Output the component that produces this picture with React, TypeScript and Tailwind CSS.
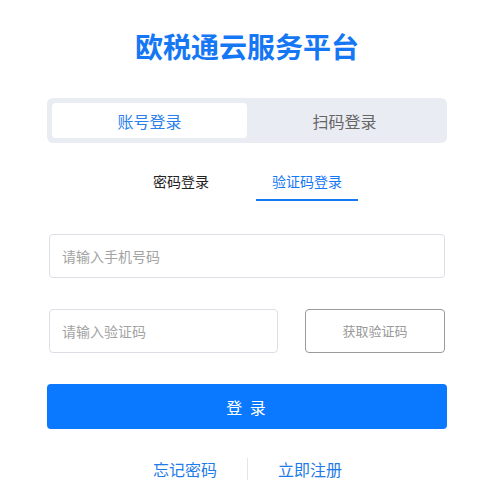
import React from "react";

export default function App() {
  const font = { fontFamily: '"Noto Sans CJK SC", "Noto Sans", sans-serif' };
  return (
    <div className="w-[496px] h-[495px] bg-white overflow-hidden" style={font}>
      <div className="w-[400px] ml-[47px] pt-[26px] flex flex-col">
        <div className="h-[40px] leading-[40px] text-center text-[28px] font-bold text-[#1677f5]">
          欧税通云服务平台
        </div>

        <div className="mt-[32px] h-[45px] p-[5px] rounded-[6px] bg-[#e9ecf3] flex">
          <div className="w-[195px] h-[35px] rounded-[4px] bg-white flex items-center justify-center text-[16px] text-[#2a7fea]">
            账号登录
          </div>
          <div className="flex-1 h-[35px] flex items-center justify-center text-[16px] text-[#666666]">
            扫码登录
          </div>
        </div>

        <div className="mt-[28px] pl-[83px] flex gap-[24px]">
          <div className="w-[102px] flex flex-col items-center">
            <div className="h-[20px] leading-[20px] text-[14px] text-[#222222]">密码登录</div>
            <div className="mt-[8px] h-[2px] w-full bg-transparent" />
          </div>
          <div className="w-[102px] flex flex-col items-center">
            <div className="h-[20px] leading-[20px] text-[14px] text-[#1677f5]">验证码登录</div>
            <div className="mt-[8px] h-[2px] w-full bg-[#1677f5]" />
          </div>
        </div>

        <div className="mt-[33px] mx-[2px] h-[44px] rounded-[4px] border border-[#dcdfe6] px-3 flex items-center text-[14px] text-[#a3a3a3]">
          请输入手机号码
        </div>

        <div className="mt-[31px] mx-[2px] flex gap-[27px]">
          <div className="w-[229px] h-[44px] rounded-[4px] border border-[#dcdfe6] px-3 flex items-center text-[14px] text-[#a3a3a3]">
            请输入验证码
          </div>
          <div className="w-[140px] h-[44px] rounded-[4px] border border-[#9a9a9a] flex items-center justify-center text-[13px] text-[#999999]">
            获取验证码
          </div>
        </div>

        <div className="mt-[31px] h-[45px] rounded-[4px] bg-[#0a78ff] flex items-center justify-center text-[16px] text-white tracking-[2px]">
          登 录
        </div>

        <div className="mt-[29px] h-[22px] pl-[106px] flex items-center">
          <div className="w-[64px] text-[16px] text-[#1f7be8] leading-[22px]">忘记密码</div>
          <div className="ml-[30px] w-px h-[22px] bg-[#e5e5e5]" />
          <div className="ml-[30px] w-[64px] text-[16px] text-[#1f7be8] leading-[22px]">立即注册</div>
        </div>
      </div>
    </div>
  );
}
